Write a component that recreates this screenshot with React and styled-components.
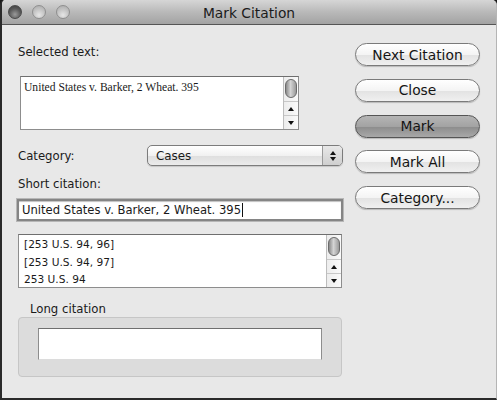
import React from "react";
import styled, { createGlobalStyle, css } from "styled-components";

const GlobalStyle = createGlobalStyle`
  html, body {
    margin: 0;
    padding: 0;
    background: #1a1a1a;
  }
  body {
    font-family: "DejaVu Sans", "Liberation Sans", sans-serif;
    color: #111;
  }
`;

const citations = ["[253 U.S. 94, 96]", "[253 U.S. 94, 97]", "253 U.S. 94"];
const buttons = [
  { label: "Next Citation" },
  { label: "Close" },
  { label: "Mark", isDefault: true },
  { label: "Mark All" },
  { label: "Category..." },
];

export default function App() {
  return (
    <>
      <GlobalStyle />
      <Window>
        <TitleBar>
          <Lights>
            <Light $dark />
            <Light />
            <Light />
          </Lights>
          <Title>Mark Citation</Title>
        </TitleBar>
        <Body>
          <LeftColumn>
            <Label>Selected text:</Label>
            <TextArea>
              <AreaText>United States v. Barker, 2 Wheat. 395</AreaText>
              <Scrollbar />
            </TextArea>
            <CategoryRow>
              <Label>Category:</Label>
              <Popup>
                <PopupValue>Cases</PopupValue>
                <PopupArrows>
                  <Arrow $up />
                  <Arrow />
                </PopupArrows>
              </Popup>
            </CategoryRow>
            <Label $gapTop={10}>Short citation:</Label>
            <TextField>
              United States v. Barker, 2 Wheat. 395
              <Caret />
            </TextField>
            <List>
              <ListItems>
                {citations.map((c) => (
                  <ListItem key={c}>{c}</ListItem>
                ))}
              </ListItems>
              <Scrollbar />
            </List>
            <GroupLabel>Long citation</GroupLabel>
            <GroupBox>
              <InnerField />
            </GroupBox>
          </LeftColumn>
          <ButtonColumn>
            {buttons.map((b) => (
              <PillButton key={b.label} $isDefault={b.isDefault}>
                {b.label}
              </PillButton>
            ))}
          </ButtonColumn>
        </Body>
      </Window>
    </>
  );
}

function Scrollbar() {
  return (
    <ScrollTrack>
      <KnobArea>
        <Knob />
      </KnobArea>
      <ScrollButton>
        <Arrow $up />
      </ScrollButton>
      <ScrollButton>
        <Arrow />
      </ScrollButton>
    </ScrollTrack>
  );
}

function Arrow({ $up }) {
  return (
    <svg width="6" height="4" viewBox="0 0 6 4">
      <polygon
        points={$up ? "3,0 6,4 0,4" : "0,0 6,0 3,4"}
        fill="#111"
      />
    </svg>
  );
}

const Window = styled.div`
  width: 497px;
  height: 400px;
  box-sizing: border-box;
  background: #e8e8e8;
  border-left: 2px solid #2a2a2a;
  border-bottom: 2px solid #2a2a2a;
  border-right: 1px solid #b5b5b5;
  border-top-left-radius: 5px;
  border-top-right-radius: 5px;
  overflow: hidden;
  display: flex;
  flex-direction: column;
`;

const TitleBar = styled.div`
  height: 24px;
  flex-shrink: 0;
  position: relative;
  display: flex;
  align-items: center;
  justify-content: center;
  background: linear-gradient(#d6d6d6, #b9b9b9 50%, #a3a3a3);
  border-bottom: 1px solid #555;
`;

const Lights = styled.div`
  position: absolute;
  left: 6px;
  top: 5px;
  display: flex;
  gap: 10px;
`;

const Light = styled.span`
  width: 14px;
  height: 14px;
  border-radius: 50%;
  box-sizing: border-box;
  border: 1px solid ${(p) => (p.$dark ? "#4a4a4a" : "#8f8f8f")};
  background: ${(p) =>
    p.$dark
      ? "radial-gradient(circle at 50% 70%, #9a9a9a 0%, #5a5a5a 55%, #3a3a3a 100%)"
      : "radial-gradient(circle at 50% 75%, #e6e6e6 0%, #c2c2c2 55%, #a9a9a9 100%)"};
`;

const Title = styled.div`
  font-size: 13.8px;
  color: #1b1b1b;
  padding-top: 1px;
`;

const Body = styled.div`
  flex: 1;
  display: grid;
  grid-template-columns: 326px 125px;
  column-gap: 12px;
  padding-left: 15px;
`;

const LeftColumn = styled.div`
  display: flex;
  flex-direction: column;
  padding-top: 19px;
`;

const Label = styled.div`
  font-size: 11.7px;
  line-height: 16px;
  margin-left: 1px;
  margin-top: ${(p) => p.$gapTop || 0}px;
  color: #1a1a1a;
`;

const fieldBorder = css`
  box-sizing: border-box;
  background: #fff;
  border: 1px solid #8d8d8d;
  border-top-color: #6f6f6f;
`;

const TextArea = styled.div`
  ${fieldBorder};
  margin: 16px 0 0 3px;
  width: 279px;
  height: 54px;
  display: flex;
`;

const AreaText = styled.div`
  flex: 1;
  font-family: "Liberation Serif", "DejaVu Serif", serif;
  font-size: 11.6px;
  padding: 4px 0 0 3px;
  color: #1a1a1a;
`;

const ScrollTrack = styled.div`
  width: 14px;
  flex-shrink: 0;
  display: flex;
  flex-direction: column;
  border-left: 1px solid #bdbdbd;
  background: linear-gradient(90deg, #ededed, #fafafa);
`;

const KnobArea = styled.div`
  flex: 1;
  padding: 2px 1px 0 1px;
`;

const Knob = styled.div`
  height: 19px;
  border-radius: 6px;
  border: 1px solid #6b6b6b;
  background: linear-gradient(90deg, #8a8a8a, #d4d4d4 45%, #9a9a9a);
  box-sizing: border-box;
`;

const ScrollButton = styled.div`
  height: 13px;
  display: flex;
  align-items: center;
  justify-content: center;
  border-top: 1px solid #c8c8c8;
`;

const CategoryRow = styled.div`
  margin-top: 15px;
  display: flex;
  align-items: center;
  justify-content: space-between;
`;

const Popup = styled.div`
  width: 196px;
  height: 21px;
  box-sizing: border-box;
  border: 1px solid #7c7c7c;
  border-radius: 5px;
  background: linear-gradient(#ffffff, #f1f1f1 50%, #dedede 51%, #ebebeb);
  box-shadow: 0 1px 1px rgba(0, 0, 0, 0.15);
  display: flex;
  align-items: center;
  overflow: hidden;
`;

const PopupValue = styled.div`
  flex: 1;
  font-size: 11.9px;
  padding-left: 8px;
  color: #1a1a1a;
`;

const PopupArrows = styled.div`
  width: 19px;
  height: 100%;
  border-left: 1px solid #9a9a9a;
  background: linear-gradient(#e8e8e8, #cfcfcf);
  display: flex;
  flex-direction: column;
  align-items: center;
  justify-content: center;
  gap: 2px;
`;

const TextField = styled.div`
  margin-top: 7px;
  height: 22px;
  box-sizing: border-box;
  background: #fff;
  border: 2px solid #858585;
  box-shadow: 0 0 0 1px #b7b7b7, inset 0 1px 1px rgba(0, 0, 0, 0.25);
  font-size: 11.6px;
  line-height: 18px;
  padding-left: 3px;
  display: flex;
  align-items: center;
  color: #1a1a1a;
`;

const Caret = styled.span`
  width: 1px;
  height: 14px;
  background: #111;
  margin-left: 1px;
`;

const List = styled.div`
  ${fieldBorder};
  margin: 13px 1px 0 1px;
  height: 54px;
  display: flex;
`;

const ListItems = styled.div`
  flex: 1;
  padding: 1px 0 0 5px;
`;

const ListItem = styled.div`
  font-size: 10.6px;
  line-height: 17.5px;
  color: #1a1a1a;
`;

const GroupLabel = styled.div`
  font-size: 11.7px;
  line-height: 16px;
  margin: 13px 0 0 13px;
  color: #1a1a1a;
`;

const GroupBox = styled.div`
  margin: 0 1px;
  height: 60px;
  box-sizing: border-box;
  border: 1px solid #c6c6c6;
  border-radius: 4px;
  background: #dcdcdc;
  padding: 10px 19px 0 19px;
`;

const InnerField = styled.div`
  ${fieldBorder};
  height: 32px;
  border-bottom-color: #dcdcdc;
`;

const ButtonColumn = styled.div`
  display: flex;
  flex-direction: column;
  gap: 12.8px;
  padding-top: 18px;
`;

const PillButton = styled.div`
  height: 23px;
  box-sizing: border-box;
  border-radius: 12px;
  border: 1px solid ${(p) => (p.$isDefault ? "#555" : "#7a7a7a")};
  background: ${(p) =>
    p.$isDefault
      ? "linear-gradient(#b5b5b5, #a3a3a3 50%, #8c8c8c 51%, #a8a8a8)"
      : "linear-gradient(#ffffff, #f4f4f4 50%, #e2e2e2 51%, #f0f0f0)"};
  box-shadow: 0 1px 1px rgba(0, 0, 0, 0.2);
  display: flex;
  align-items: center;
  justify-content: center;
  font-size: 13.8px;
  color: #151515;
`;
